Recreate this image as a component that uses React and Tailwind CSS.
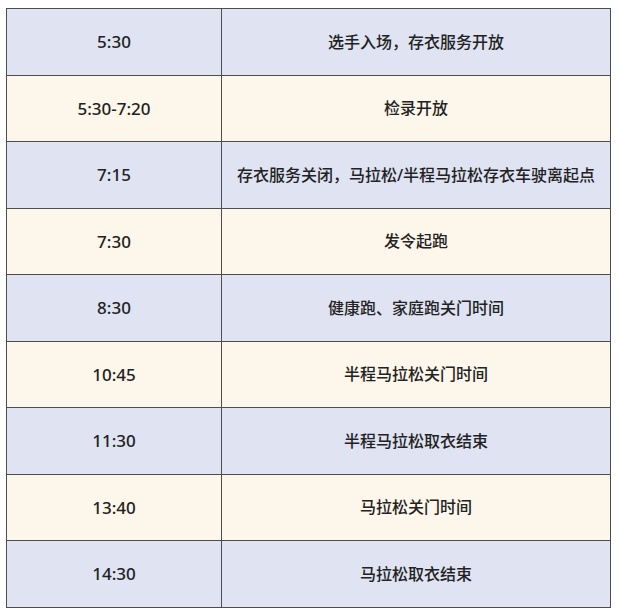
import React from 'react';

const rows = [
  { time: '5:30', event: '选手入场，存衣服务开放' },
  { time: '5:30-7:20', event: '检录开放' },
  { time: '7:15', event: '存衣服务关闭，马拉松/半程马拉松存衣车驶离起点' },
  { time: '7:30', event: '发令起跑' },
  { time: '8:30', event: '健康跑、家庭跑关门时间' },
  { time: '10:45', event: '半程马拉松关门时间' },
  { time: '11:30', event: '半程马拉松取衣结束' },
  { time: '13:40', event: '马拉松关门时间' },
  { time: '14:30', event: '马拉松取衣结束' },
];

export default function App() {
  return (
    <div className="w-[618px] h-[613px] bg-white pt-[8px] pl-[6px]">
      <table
        className="w-[605px] border-collapse text-[16px] font-medium text-[#222]"
        style={{ fontFamily: '"Noto Sans", "Noto Sans CJK SC", sans-serif' }}
      >
        <tbody>
          {rows.map((r, i) => (
            <tr key={i} className={i % 2 === 0 ? 'bg-[#dfe3f2]' : 'bg-[#fdf6ea]'}>
              <td className="w-[215px] h-[66.5px] border border-[#4d4d4d] text-center align-middle p-0 text-[17px]">
                {r.time}
              </td>
              <td className="h-[66.5px] border border-[#4d4d4d] text-center align-middle p-0">
                {r.event}
              </td>
            </tr>
          ))}
        </tbody>
      </table>
    </div>
  );
}
